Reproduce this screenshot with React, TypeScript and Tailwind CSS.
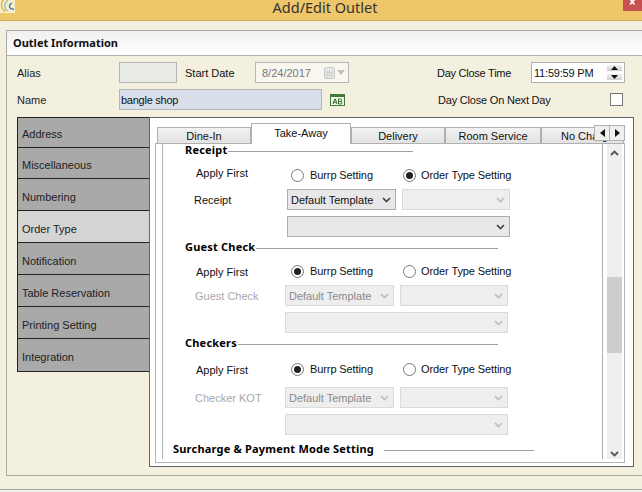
import React from "react";

const baseFont = { fontFamily: '"Liberation Sans", Arial, sans-serif' };
const boldFont = { fontFamily: '"Noto Sans", "Liberation Sans", sans-serif' };

function Chevron({ color = "#444" }: { color?: string }) {
  return (
    <svg width="9" height="6" viewBox="0 0 9 6" className="shrink-0">
      <path d="M1 1 L4.5 4.5 L8 1" fill="none" stroke={color} strokeWidth="1.7" />
    </svg>
  );
}

function Select({ w, text, disabled }: { w: string; text?: string; disabled?: boolean }) {
  return (
    <div
      className={`${w} h-[21px] shrink-0 flex items-center justify-between pl-[3px] pr-[4px] border ${
        disabled ? "border-[#dadada] bg-[#eeeeee] text-[#8a8a8a]" : "border-[#adadad] bg-[#e8e8e8] text-[#111]"
      }`}
    >
      <span>{text}</span>
      <Chevron color={disabled ? "#bdbdbd" : "#444"} />
    </div>
  );
}

function Radio({ on, label, w, gap }: { on?: boolean; label: string; w?: string; gap: string }) {
  return (
    <div className={`flex items-center ${gap} ${w ?? ""}`}>
      <div className="w-[13px] h-[13px] shrink-0 rounded-full border border-[#777] bg-white flex items-center justify-center">
        {on && <div className="w-[7px] h-[7px] rounded-full bg-[#222]" />}
      </div>
      <span className="text-[#111] tracking-[-0.1px]">{label}</span>
    </div>
  );
}

function Legend({ title, indent, lineW, gap, mt, h }: { title: string; indent: string; lineW: string; gap: string; mt: string; h: string }) {
  return (
    <div className={`flex items-center ${h} ${indent} ${mt}`}>
      <span style={boldFont} className="font-bold text-black whitespace-nowrap leading-[12px] tracking-[0.2px]">{title}</span>
      <div className={`${gap} ${lineW} h-px mt-[2px] bg-[#a0a0a0]`} />
    </div>
  );
}

type SectionProps = {
  title: string;
  field: string;
  burrp?: boolean;
  lineW: string;
  legendMt: string;
  legendH: string;
  applyMt: string;
  selectMt: string;
  labelPad: string;
  fieldIndent: string;
  fieldW: string;
};

function Section(p: SectionProps) {
  const dis = !!p.burrp;
  return (
    <div>
      <Legend title={p.title} indent="ml-[22px]" lineW={p.lineW} gap="ml-px" mt={p.legendMt} h={p.legendH} />
      <div className={`flex items-center h-[20px] ml-[33px] ${p.applyMt}`}>
        <span className={`w-[95px] text-[#111] ${p.labelPad}`}>Apply First</span>
        <Radio on={p.burrp} label="Burrp Setting" w="w-[112px]" gap="gap-[6px]" />
        <Radio on={!p.burrp} label="Order Type Setting" gap="gap-[5px]" />
      </div>
      <div className={`flex items-center h-[21px] ${p.selectMt}`}>
        <span className={`${p.fieldIndent} ${p.fieldW} ${dis ? "text-[#a8a8a8]" : "text-[#111]"}`}>{p.field}</span>
        <Select w="w-[109px]" text="Default Template" disabled={dis} />
        <div className="ml-[6px]">
          <Select w="w-[108px]" disabled />
        </div>
      </div>
      <div className={`mt-[6px] ${dis ? "ml-[122px]" : "ml-[124px]"}`}>
        <Select w="w-[223px]" disabled={dis} />
      </div>
    </div>
  );
}

const navItems = [
  { label: "Address", h: "h-[30px]", pt: "pt-[2px]" },
  { label: "Miscellaneous", h: "h-[31px]", pt: "pt-[4px]" },
  { label: "Numbering", h: "h-[32px]", pt: "pt-[4px]" },
  { label: "Order Type", h: "h-[32px]", pt: "pt-[4px]", active: true },
  { label: "Notification", h: "h-[32px]", pt: "pt-[4px]" },
  { label: "Table Reservation", h: "h-[32px]", pt: "pt-[4px]" },
  { label: "Printing Setting", h: "h-[32px]", pt: "pt-[4px]" },
  { label: "Integration", h: "h-[32px]", pt: "pt-[4px]", last: true },
];

function Tab({ label, w }: { label: string; w: string }) {
  return (
    <div className={`${w} h-[17px] shrink-0 border border-[#b0b0b0] bg-gradient-to-b from-[#f2f2f2] to-[#e2e2e2] flex items-center justify-center text-[#111] whitespace-nowrap overflow-hidden`}>
      {label}
    </div>
  );
}

export default function App() {
  return (
    <div style={baseFont} className="w-[642px] h-[492px] overflow-hidden bg-[#f4f0e0] text-[11px] leading-[14px] text-[#222] flex flex-col">
      {/* Title bar */}
      <div className="relative h-[21px] shrink-0 bg-[#efc669] border-b border-[#d9a94e] flex items-start justify-center">
        <span style={boldFont} className="text-[14.5px] leading-[14px] text-[#333] ml-[8px]">Add/Edit Outlet</span>
        <div className="absolute left-0 top-0 w-[15px] h-[13px] bg-[#f6efc8] overflow-hidden">
          <svg width="15" height="13" viewBox="0 0 15 13">
            <path d="M4 -1 C0 3 1 8 5 12" fill="none" stroke="#e0b040" strokeWidth="1.4" />
            <path d="M8 0 C3 4 4 9 8 11" fill="none" stroke="#8fc0c8" strokeWidth="1.3" />
            <path d="M12 3 C8 5 9 10 14 9" fill="none" stroke="#3a6ea5" strokeWidth="1.3" />
          </svg>
        </div>
        <div className="absolute right-0 top-0 w-[19px] h-[11px] bg-[#c75050] flex items-start justify-center overflow-hidden">
          <svg width="9" height="7" viewBox="0 0 9 7">
            <path d="M2 -1 L6.5 4.5 M7 -1 L2 4.5" stroke="#fff" strokeWidth="1.6" fill="none" />
          </svg>
        </div>
      </div>

      {/* Outer panel */}
      <div className="mt-[9px] ml-[6px] w-[660px] h-[446px] shrink-0 border border-[#a9a9a9] flex flex-col">
        <div className="h-[25px] shrink-0 border-b border-[#b0b0b0] bg-gradient-to-b from-[#f0f0f0] to-[#ffffff] flex items-center pl-[6px]">
          <span style={boldFont} className="font-bold text-[#111]">Outlet Information</span>
        </div>

        {/* Form rows */}
        <div className="flex items-center mt-[6px] h-[21px] shrink-0">
          <span className="ml-[10px] w-[102px] shrink-0">Alias</span>
          <div className="w-[58px] h-[21px] shrink-0 border border-[#b5b5b5] bg-[#e8ebe6]" />
          <span className="ml-[8px] w-[70px] shrink-0 text-[#111]">Start Date</span>
          <div className="w-[94px] h-[21px] shrink-0 border border-[#b8b8b8] bg-[#f8f6ee] flex items-center pl-[6px] pr-[3px] justify-between text-[#777]">
            <span>8/24/2017</span>
            <div className="flex items-center gap-[2px]">
              <svg width="11" height="12" viewBox="0 0 11 12">
                <rect x="0.5" y="0.5" width="10" height="11" rx="1.5" fill="#e6e6e6" stroke="#c8c8c8" />
                <path d="M3 3.5V10M5.5 3.5V10M8 3.5V10M2 5.5H9M2 8H9" stroke="#d0d0d0" />
              </svg>
              <svg width="8" height="5" viewBox="0 0 8 5"><path d="M0 0H8L4 5Z" fill="#c0c0c0" /></svg>
            </div>
          </div>
          <span className="ml-[88px] w-[94px] shrink-0 text-[#111] tracking-[-0.25px]">Day Close Time</span>
          <div className="w-[94px] h-[21px] shrink-0 border border-[#b0b0b0] bg-white flex items-center justify-between pl-[2px] pr-[2px] text-[#111]">
            <span className="tracking-[-0.2px]">11:59:59 PM</span>
            <div className="flex flex-col gap-[3px]">
              <div className="w-[15px] h-[6px] bg-gradient-to-b from-[#f2f2f2] to-[#cfcfcf] flex items-center justify-center">
                <svg width="7" height="4" viewBox="0 0 7 4"><path d="M0 4H7L3.5 0Z" fill="#111" /></svg>
              </div>
              <div className="w-[15px] h-[6px] bg-gradient-to-b from-[#f2f2f2] to-[#cfcfcf] flex items-center justify-center">
                <svg width="7" height="4" viewBox="0 0 7 4"><path d="M0 0H7L3.5 4Z" fill="#111" /></svg>
              </div>
            </div>
          </div>
        </div>

        <div className="flex items-center mt-[6px] h-[21px] shrink-0">
          <span className="ml-[10px] w-[102px] shrink-0 pt-[1px]">Name</span>
          <div className="w-[203px] h-[21px] shrink-0 border border-[#b5b5b5] bg-[#d9dfea] pl-[1px] flex items-center text-[#111] tracking-[-0.25px]">bangle shop</div>
          <svg width="15" height="12" viewBox="0 0 15 12" className="ml-[8px] shrink-0">
            <rect x="0.5" y="0.5" width="14" height="11" fill="#f2f6e8" stroke="#3f7a3a" />
            <rect x="1" y="1" width="13" height="2" fill="#3f7a3a" />
            <path d="M3 10L4.8 5H5.4L7 10M3.7 8.3H6.3M8.5 5V10H10.6C12.4 10 12.4 7.5 10.6 7.5H8.5M8.5 7.5H10.4C12 7.5 12 5 10.4 5H8.5" fill="none" stroke="#2f6a2c" strokeWidth="1" />
          </svg>
          <span className="ml-[93px] w-[172px] shrink-0 text-[#111] tracking-[-0.2px]">Day Close On Next Day</span>
          <div className="w-[13px] h-[13px] shrink-0 border border-[#777] bg-white" />
        </div>

        {/* Main area */}
        <div className="flex items-start mt-[7px] ml-[10px]">
          <div className="w-[132px] shrink-0 border-l border-t border-b border-[#222] flex flex-col">
            {navItems.map((n) => (
              <div
                key={n.label}
                className={`${n.h} ${n.pt} shrink-0 pl-[4px] flex items-center text-[#222] ${n.last ? "" : "border-b border-[#222]"} ${
                  n.active ? "bg-[#d4d4d4]" : "bg-[#a9a9a9]"
                }`}
              >
                {n.label}
              </div>
            ))}
          </div>

          <div className="relative w-[485px] h-[350px] shrink-0 border border-[#666] bg-white">
            {/* Tabs */}
            <div className="relative z-10 flex items-end ml-[7px] mt-[5px] h-[21px] -mb-px w-[467px] overflow-hidden">
              <Tab label="Dine-In" w="w-[94px]" />
              <div className="w-[100px] h-[21px] shrink-0 border border-b-0 border-[#b0b0b0] bg-white flex items-start pt-[2px] justify-center text-[#111]">Take-Away</div>
              <Tab label="Delivery" w="w-[94px]" />
              <Tab label="Room Service" w="w-[96px]" />
              <div className="w-[83px] h-[17px] shrink-0 border border-[#b0b0b0] bg-gradient-to-b from-[#f2f2f2] to-[#e2e2e2] pl-[19px] flex items-center text-[#111] whitespace-nowrap overflow-hidden">No Charge</div>
            </div>
            {/* Tab scroller lies over the tab strip */}
            <div className="absolute z-20 left-[444px] top-[7px] flex">
              <div className="w-[16px] h-[16px] border border-[#b0b0b0] bg-[#efefef] flex items-center justify-center">
                <svg width="5" height="8" viewBox="0 0 5 8"><path d="M5 0V8L0 4Z" fill="#111" /></svg>
              </div>
              <div className="w-[16px] h-[16px] -ml-px border border-[#b0b0b0] bg-[#efefef] flex items-center justify-center">
                <svg width="5" height="8" viewBox="0 0 5 8"><path d="M0 0V8L5 4Z" fill="#111" /></svg>
              </div>
            </div>

            {/* Tab panel */}
            <div className="ml-[5px] w-[470px] h-[320px] border border-[#b5b5b5] flex items-start">
              <div className="ml-[6px] w-[441px] h-[315px] shrink-0 border-x border-[#b0b0b0] overflow-hidden">
                <Section
                  title="Receipt"
                  field="Receipt"
                  lineW="w-[185px]"
                  legendMt="mt-0"
                  legendH="h-[12px]"
                  applyMt="mt-[9px]"
                  selectMt="mt-[4px]"
                  labelPad="pb-[4px]"
                  fieldIndent="ml-[31px]"
                  fieldW="w-[93px]"
                />
                <Section
                  title="Guest Check"
                  field="Guest Check"
                  burrp
                  lineW="w-[242px]"
                  legendMt="mt-[3px]"
                  legendH="h-[14px]"
                  applyMt="mt-[7px]"
                  selectMt="mt-[4px]"
                  labelPad="pt-[2px]"
                  fieldIndent="ml-[32px]"
                  fieldW="w-[90px]"
                />
                <Section
                  title="Checkers"
                  field="Checker KOT"
                  burrp
                  lineW="w-[260px]"
                  legendMt="mt-[3px]"
                  legendH="h-[14px]"
                  applyMt="mt-[9px]"
                  selectMt="mt-[8px]"
                  labelPad="pt-[2px]"
                  fieldIndent="ml-[32px]"
                  fieldW="w-[90px]"
                />
                <Legend title="Surcharge & Payment Mode Setting" indent="ml-[10px]" lineW="w-[150px]" gap="ml-[10px]" mt="mt-[7px]" h="h-[14px]" />
              </div>
              {/* Scrollbar */}
              <div className="ml-[4px] w-[15px] h-[315px] shrink-0 bg-[#efefef] flex flex-col items-center">
                <svg width="9" height="6" viewBox="0 0 9 6" className="mt-[6px]">
                  <path d="M1 5 L4.5 1.5 L8 5" fill="none" stroke="#555" strokeWidth="1.8" />
                </svg>
                <div className="w-[15px] h-[76px] mt-[121px] bg-[#cdcdcd]" />
                <svg width="9" height="6" viewBox="0 0 9 6" className="mt-[98px]">
                  <path d="M1 1 L4.5 4.5 L8 1" fill="none" stroke="#555" strokeWidth="1.8" />
                </svg>
              </div>
            </div>
          </div>
        </div>
      </div>

      {/* Bottom bar */}
      <div className="mt-[13px] h-[3px] shrink-0 border-t border-[#a9a9a9] bg-[#f0f0f0]" />
    </div>
  );
}
